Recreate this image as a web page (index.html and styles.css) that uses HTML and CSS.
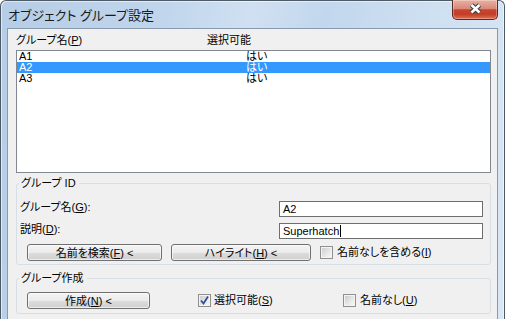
FILE: index.html
```html
<!DOCTYPE html>
<html lang="ja">

<head>
    <meta charset="UTF-8">
    <meta name="viewport" content="width=device-width, initial-scale=1.0">
    <title>オブジェクト グループ設定</title>

    <link rel="stylesheet" href="styles.css">
</head>

<body>
    <div class="window">
        <div class="titlebar">
            <span class="title">オブジェクト グループ設定</span>
            <button type="button" class="close" aria-label="閉じる">
                <svg width="46" height="20" viewBox="0 0 46 20">
                    <path d="M19.5 6 L27.5 13.5 M27.5 6 L19.5 13.5" stroke="#3b3b3b" stroke-width="4.6" fill="none" />
                    <path d="M19.5 6 L27.5 13.5 M27.5 6 L19.5 13.5" stroke="#ffffff" stroke-width="2.6" fill="none" />
                </svg>
            </button>
        </div>

        <div class="client">
            <div class="colhead">
                <span class="col-name">グループ名(<u>P</u>)</span>
                <span>選択可能</span>
            </div>
            <div class="listbox">
                <div class="row"><span class="col-name">A1</span><span>はい</span></div>
                <div class="row selected"><span class="col-name">A2</span><span>はい</span></div>
                <div class="row"><span class="col-name">A3</span><span>はい</span></div>
            </div>

            <fieldset class="group group-id">
                <legend>グループ ID</legend>
                <div class="field">
                    <label>グループ名(<u>G</u>):</label>
                    <div class="textbox">A2</div>
                </div>
                <div class="field">
                    <label>説明(<u>D</u>):</label>
                    <div class="textbox">Superhatch<span class="caret"></span></div>
                </div>
                <div class="actions">
                    <button type="button" class="btn btn-find">名前を検索(<u>F</u>) &lt;</button>
                    <button type="button" class="btn btn-highlight">ハイライト(<u>H</u>) &lt;</button>
                    <label class="check check-unnamed">
                        <span class="box"></span>
                        <span>名前なしを含める(<u>I</u>)</span>
                    </label>
                </div>
            </fieldset>

            <fieldset class="group group-create">
                <legend>グループ作成</legend>
                <div class="actions">
                    <button type="button" class="btn btn-create">作成(<u>N</u>) &lt;</button>
                    <label class="check check-selectable">
                        <span class="box">
                            <svg width="11" height="11" viewBox="0 0 11 11">
                                <path d="M2 5.5 L4.5 8.5 L9 1.5" stroke="#2f4f98" stroke-width="1.8" fill="none" />
                            </svg>
                        </span>
                        <span>選択可能(<u>S</u>)</span>
                    </label>
                    <label class="check">
                        <span class="box"></span>
                        <span>名前なし(<u>U</u>)</span>
                    </label>
                </div>
            </fieldset>
        </div>
    </div>
</body>

</html>
```

FILE: styles.css
```css
* {
    box-sizing: border-box;
}

body {
    margin: 0;
    width: 505px;
    height: 319px;
    overflow: hidden;
    background: #ffffff;
    color: #000000;
    font-family: "Liberation Sans", "Noto Sans CJK JP", sans-serif;
    font-size: 11px;
    font-feature-settings: "palt";
}

u {
    text-decoration-thickness: 1px;
    text-underline-offset: 1px;
}

/* Window frame */

.window {
    height: 340px;
    padding: 0 6px;
    border: 1px solid #4f5a67;
    border-bottom: none;
    border-radius: 6px 6px 0 0;
    background: linear-gradient(100deg, #b6cde7 0%, #c1d6ec 30%, #d0e0f1 45%, #c2d7ed 58%, #cfe0f1 78%, #dae7f4 100%);
    box-shadow: inset 1px 1px 0 rgba(255, 255, 255, 0.55), inset -1px 0 0 rgba(255, 255, 255, 0.55);
}

.titlebar {
    display: flex;
    justify-content: space-between;
    align-items: flex-start;
    height: 27px;
}

.title {
    padding: 6px 0 0 1px;
    font-size: 13px;
    line-height: 18px;
    color: #1a1a1a;
}

.close {
    width: 46px;
    height: 20px;
    margin-top: -1px;
    padding: 0;
    border: 1px solid #5c2a23;
    border-top: none;
    border-radius: 0 0 5px 5px;
    background: linear-gradient(#e9b1a2, #d9897a 45%, #c7442c 52%, #c43e27 75%, #de7153 100%);
    box-shadow: inset 0 0 0 1px rgba(255, 255, 255, 0.3);
}

.close svg {
    display: block;
    margin: -1px 0 0 -1px;
}

.client {
    height: 320px;
    padding: 5px 6px 0 8px;
    border: 1px solid #8a9aae;
    background: #f0f0f0;
}

/* Object list */

.colhead {
    display: flex;
    height: 16px;
    line-height: 13px;
}

.colhead .col-name {
    width: 191px;
}

.listbox {
    height: 123px;
    border: 1px solid #828790;
    background: #ffffff;
}

.row {
    display: flex;
    height: 11px;
    padding-left: 2px;
    line-height: 11px;
}

.row .col-name {
    width: 227px;
}

.row.selected {
    background: #3399ff;
    color: #ffffff;
}

/* Group boxes */

.group {
    min-width: 0;
    margin: 4px 0 0;
    padding: 11px 7px 3px 3px;
    border: 1px solid #d5dfe5;
    border-radius: 3px;
}

.group legend {
    margin-left: -1px;
    padding: 0 3px 0 2px;
    line-height: 13px;
}

.group-create {
    margin-top: 7px;
    padding: 7px 7px 4px 3px;
}

.field {
    display: flex;
    align-items: flex-start;
    height: 16px;
}

.field + .field {
    margin-top: 6px;
}

.field label {
    flex: 1;
    line-height: 13px;
}

.textbox {
    display: flex;
    align-items: center;
    width: 204px;
    height: 16px;
    padding-left: 3px;
    border: 1px solid #6e6e6e;
    background: #ffffff;
    line-height: 14px;
}

.caret {
    width: 1px;
    height: 12px;
    margin-left: 1px;
    background: #000000;
}

.actions {
    display: flex;
    align-items: center;
    height: 17px;
    margin-top: 5px;
}

.group-create .actions {
    margin-top: 0;
}

.btn {
    height: 17px;
    padding: 0;
    border: 1px solid #707070;
    border-radius: 3px;
    background: linear-gradient(#f4f4f4, #ebebeb 50%, #dcdcdc 52%, #d0d0d0);
    box-shadow: inset 0 0 0 1px rgba(255, 255, 255, 0.6);
    color: #000000;
    font: inherit;
    line-height: 14px;
    text-align: center;
}

.btn-find {
    width: 135px;
    margin-left: 7px;
}

.btn-highlight {
    width: 140px;
    margin-left: 9px;
}

.btn-create {
    width: 123px;
    margin-left: 7px;
}

.check {
    display: flex;
    align-items: center;
    gap: 4px;
    line-height: 13px;
}

.check-unnamed {
    margin-left: 9px;
}

.check-selectable {
    width: 145px;
    margin-left: 48px;
    gap: 3px;
}

.box {
    display: block;
    width: 13px;
    height: 13px;
    padding: 0;
    border: 1px solid #8e8f8f;
    background: linear-gradient(135deg, #c9c9c9, #e9e9e9 60%, #f7f7f7);
    box-shadow: inset 0 0 0 1px #f4f4f4;
}

.box svg {
    display: block;
}
```
